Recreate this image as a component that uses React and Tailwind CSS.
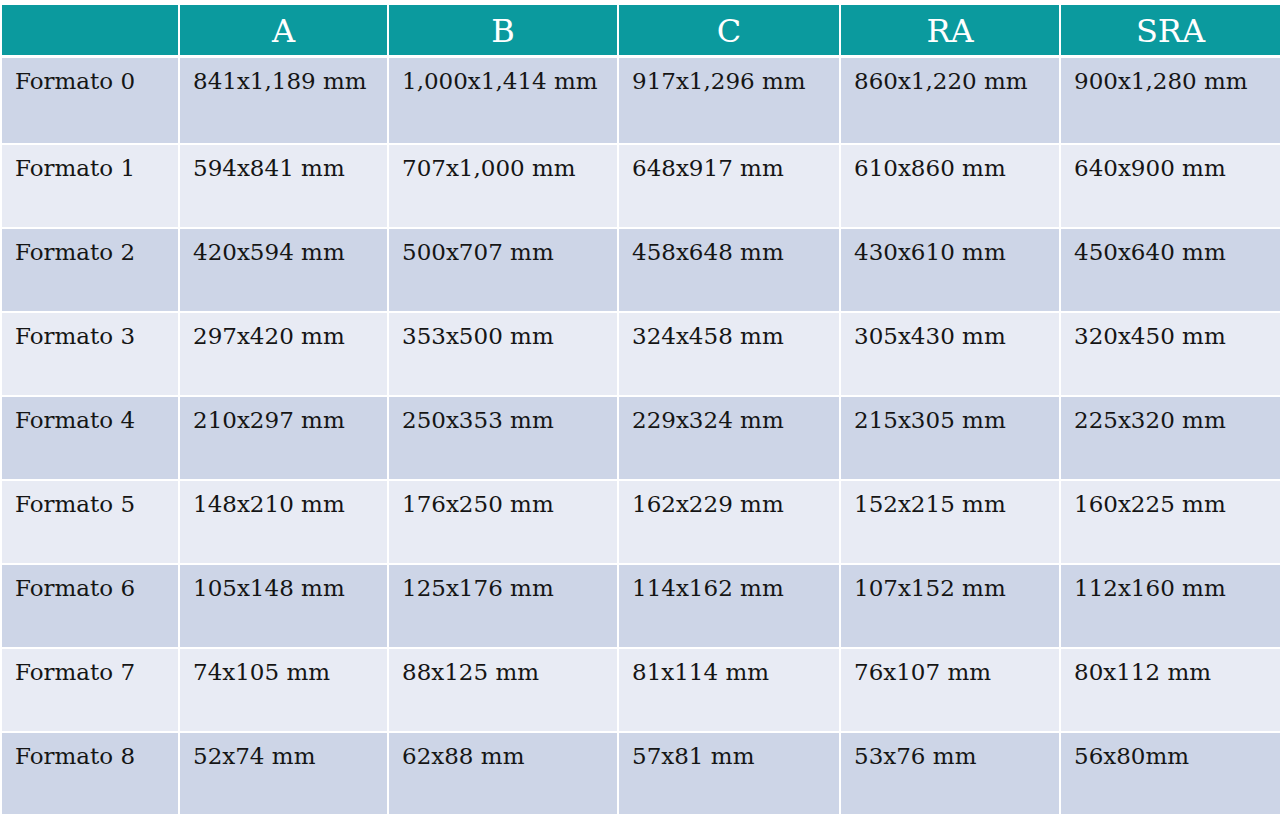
const headers = ["", "A", "B", "C", "RA", "SRA"];

const rows = [
    ["Formato 0", "841x1,189 mm", "1,000x1,414 mm", "917x1,296 mm", "860x1,220 mm", "900x1,280 mm"],
    ["Formato 1", "594x841 mm", "707x1,000 mm", "648x917 mm", "610x860 mm", "640x900 mm"],
    ["Formato 2", "420x594 mm", "500x707 mm", "458x648 mm", "430x610 mm", "450x640 mm"],
    ["Formato 3", "297x420 mm", "353x500 mm", "324x458 mm", "305x430 mm", "320x450 mm"],
    ["Formato 4", "210x297 mm", "250x353 mm", "229x324 mm", "215x305 mm", "225x320 mm"],
    ["Formato 5", "148x210 mm", "176x250 mm", "162x229 mm", "152x215 mm", "160x225 mm"],
    ["Formato 6", "105x148 mm", "125x176 mm", "114x162 mm", "107x152 mm", "112x160 mm"],
    ["Formato 7", "74x105 mm", "88x125 mm", "81x114 mm", "76x107 mm", "80x112 mm"],
    ["Formato 8", "52x74 mm", "62x88 mm", "57x81 mm", "53x76 mm", "56x80mm"],
];

export default function App() {
    return (
        <div className="w-[1280px] h-[816px] bg-white overflow-hidden pt-[5px] pl-[2px]" style={{ fontFamily: '"DejaVu Serif", serif' }}>
            <div className="grid grid-cols-[176px_207px_228px_220px_218px_1fr] gap-x-[2px] mb-[3px]">
                {headers.map((h, i) => (
                    <div key={i} className="h-[50px] bg-[#0b9a9e] flex items-center justify-center text-white text-[32px] pt-[2px]">
                        {h}
                    </div>
                ))}
            </div>
            <div className="grid grid-cols-[176px_207px_228px_220px_218px_1fr] gap-x-[2px] gap-y-[2px]">
                {rows.map((row, r) =>
                    row.map((cell, c) => (
                        <div
                            key={`${r}-${c}`}
                            className={`pt-[6px] pl-[13px] text-[23px] text-[#151515] whitespace-nowrap ${r === 0 ? 'h-[85px]' : r === 8 ? 'h-[81px]' : 'h-[82px]'} ${r % 2 === 0 ? 'bg-[#cdd5e7]' : 'bg-[#e8ebf4]'}`}
                        >
                            {cell}
                        </div>
                    ))
                )}
            </div>
        </div>
    );
}
